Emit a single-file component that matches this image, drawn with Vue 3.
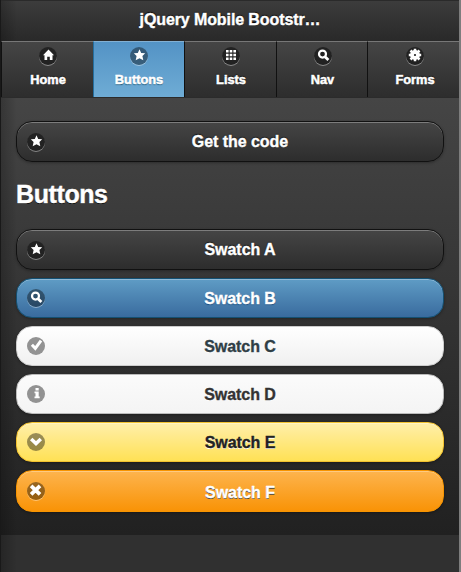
<script setup>
const tabs = [
  { label: 'Home', icon: 'home' },
  { label: 'Buttons', icon: 'star', active: true },
  { label: 'Lists', icon: 'grid' },
  { label: 'Nav', icon: 'search' },
  { label: 'Forms', icon: 'gear' },
]

const swatches = [
  { label: 'Swatch A', theme: 'a', icon: 'star' },
  { label: 'Swatch B', theme: 'b', icon: 'search' },
  { label: 'Swatch C', theme: 'c', icon: 'check' },
  { label: 'Swatch D', theme: 'd', icon: 'info' },
  { label: 'Swatch E', theme: 'e', icon: 'down' },
  { label: 'Swatch F', theme: 'f', icon: 'x' },
]

// Filled glyphs on an 18 x 18 grid
const glyphs = {
  home: 'M9.5 2.6 L15 8.2 H13.5 V13 H10.8 V9.8 H8.2 V13 H5.5 V8.2 H4 Z',
  star: 'M9.5 2.2 L11.2 5.9 L15.2 6.3 L12.4 9.1 L13.3 13.3 L9.5 11.3 L5.7 13.3 L6.6 9.1 L3.8 6.3 L7.8 5.9 Z',
  grid: 'M4 3h2.6v2.6H4z M7.7 3h2.6v2.6H7.7z M11.4 3H14v2.6h-2.6z M4 6.7h2.6v2.6H4z M7.7 6.7h2.6v2.6H7.7z M11.4 6.7H14v2.6h-2.6z M4 10.4h2.6V13H4z M7.7 10.4h2.6V13H7.7z M11.4 10.4H14V13h-2.6z',
  info: 'M8.5 3h3.2v2.6H8.5z M7.5 6.5h4.2v5h1V13.2H7.5v-1.7h1V8.2h-1z',
}
</script>

<template>
  <main class="page">
    <header class="header"><h1>jQuery Mobile Bootstr…</h1></header>

    <nav class="tabs">
      <a v-for="tab in tabs" :key="tab.label" class="tab" :class="{ active: tab.active }">
        <span class="badge">
          <svg viewBox="0 0 18 18" width="18" height="18">
            <path v-if="glyphs[tab.icon]" :d="glyphs[tab.icon]" fill="#fff" />
            <g v-else-if="tab.icon === 'search'" fill="none" stroke="#fff">
              <circle cx="8.5" cy="7.1" r="3.5" stroke-width="2.2" />
              <path d="M11 9.7 L14.4 13.1" stroke-width="2.8" />
            </g>
            <g v-else fill="none" stroke="#fff">
              <circle cx="9" cy="8" r="3" stroke-width="3.8" />
              <path d="M9 1.8V4.5M9 11.5V14.2M2.8 8H5.5M12.5 8H15.2M4.5 3.5L6.5 5.5M11.5 10.5L13.5 12.5M13.5 3.5L11.5 5.5M6.5 10.5L4.5 12.5" stroke-width="2.5" />
            </g>
          </svg>
        </span>
        <span class="tab-label">{{ tab.label }}</span>
      </a>
    </nav>

    <section class="content">
      <button class="btn a">
        <span class="badge">
          <svg viewBox="0 0 18 18" width="18" height="18"><path :d="glyphs.star" fill="#fff" /></svg>
        </span>
        <span class="label">Get the code</span>
      </button>

      <h2>Buttons</h2>

      <div class="list">
        <button v-for="s in swatches" :key="s.theme" class="btn" :class="s.theme">
          <span class="badge">
            <svg viewBox="0 0 18 18" width="18" height="18">
              <path v-if="glyphs[s.icon]" :d="glyphs[s.icon]" fill="#fff" />
              <g v-else fill="none" stroke="#fff">
                <template v-if="s.icon === 'search'">
                  <circle cx="8.5" cy="7.1" r="3.5" stroke-width="2.2" />
                  <path d="M11 9.7 L14.4 13.1" stroke-width="2.8" />
                </template>
                <path v-else-if="s.icon === 'check'" d="M4.9 7.8 L8.3 11.4 L14 3.6" stroke-width="3" />
                <path v-else-if="s.icon === 'down'" d="M4.2 6 L9 10.6 L13.8 6" stroke-width="3.5" />
                <path v-else d="M4.1 3.8 L13 12.4 M13 3.8 L4.1 12.4" stroke-width="3.8" />
              </g>
            </svg>
          </span>
          <span class="label">{{ s.label }}</span>
        </button>
      </div>
    </section>
  </main>
</template>

<style>
body {
  margin: 0;
  background: #303030;
}
</style>

<style scoped>
.page {
  box-sizing: border-box;
  height: 572px;
  border-left: 1px solid #191919;
  border-right: 2px solid #7d7d7d;
  background: linear-gradient(90deg, rgba(0, 0, 0, 0.22), transparent 16px), #303030;
  font-family: 'Liberation Sans', Arial, sans-serif;
  font-weight: bold;
  color: #fff;
}

.header {
  box-sizing: border-box;
  height: 41px;
  border-top: 1px solid #2a2a2a;
  background: linear-gradient(90deg, rgba(0, 0, 0, 0.22), transparent 16px), linear-gradient(#3c3c3c, #292929);
}

h1 {
  margin: 0;
  font-size: 16px;
  line-height: 38px;
  letter-spacing: -0.1px;
  text-align: center;
  text-shadow: 0 -1px 1px #000;
  -webkit-text-stroke: 0.4px #fff;
}

.tabs {
  display: grid;
  grid-template-columns: 92px 91px 92px 91px 1fr;
  height: 57px;
  box-sizing: border-box;
  border-bottom: 1px solid #2b2b2b;
}

.tab {
  display: flex;
  flex-direction: column;
  align-items: center;
  box-sizing: border-box;
  padding: 5px 0 0 1px;
  border-top: 1px solid #777;
  border-left: 1px solid #111;
  background: linear-gradient(#454545, #2d2d2d);
}

.tab:nth-child(4) {
  padding-left: 1px;
}

.tab:nth-child(5) {
  padding-left: 3px;
}

.tab.active {
  padding-left: 0;
  border-top-color: #82b0d3;
  border-left-color: #256f9f;
  background: linear-gradient(#5393c5, #6facd5);
}

.tab-label {
  margin-top: 7px;
  font-size: 12.8px;
  line-height: 15px;
  text-shadow: 0 -1px 1px #111;
  -webkit-text-stroke: 0.5px #fff;
}

.tab.active .tab-label {
  text-shadow: 0 1px 1px #145072;
}

.badge {
  flex: none;
  width: 18px;
  height: 18px;
  border-radius: 9px;
  background: rgba(0, 0, 0, 0.4);
  box-shadow: 0 1px 0 rgba(255, 255, 255, 0.4);
}

.tab:not(.active) .badge,
.a .badge {
  background: #222;
}

.badge svg {
  display: block;
}

.content {
  box-sizing: border-box;
  height: 437px;
  padding: 23px 14px 0 15px;
  background: linear-gradient(90deg, rgba(0, 0, 0, 0.22), transparent 16px), linear-gradient(#454545, #212121);
}

h2 {
  margin: 17px 0 19px;
  font-size: 25px;
  line-height: 31px;
  letter-spacing: -0.4px;
  text-shadow: 0 1px 0 #111;
  -webkit-text-stroke: 0.4px #fff;
}

.list {
  display: flex;
  flex-direction: column;
  gap: 8px;
}

.btn {
  display: flex;
  align-items: center;
  box-sizing: border-box;
  width: 428px;
  height: 40px;
  margin: 0;
  padding: 0 8px 0 10px;
  border: 1px solid;
  border-radius: 16px;
  font: bold 16px/20px 'Liberation Sans', Arial, sans-serif;
  color: #fff;
  box-shadow: 0 1px 3px rgba(0, 0, 0, 0.3), inset 0 1px 0 rgba(255, 255, 255, 0.3);
}

.label {
  flex: 1;
  padding-top: 2px;
  text-align: center;
  letter-spacing: -0.05px;
  -webkit-text-stroke: 0.35px currentColor;
}

.a {
  height: 41px;
  border-color: #111;
  background: linear-gradient(#454545, #2d2d2d);
  text-shadow: 0 -1px 1px #111;
}

.a .label {
  padding-top: 0;
}

.b {
  border-color: #145072;
  background: linear-gradient(#5f9cc5, #396b9e);
  text-shadow: 0 1px 1px #194b7e;
}

.c {
  border-color: #ccc;
  background: linear-gradient(#fff, #f0f0f0);
  color: #2f3e46;
  text-shadow: 0 1px 0 #fff;
}

.d {
  border-color: #bbb;
  background: linear-gradient(#fbfbfb, #f4f4f4);
  color: #333;
  text-shadow: 0 1px 0 #fff;
}

.e {
  border-color: #f3c22f;
  background: linear-gradient(#ffefaa, #ffe155);
  color: #222;
  text-shadow: 0 1px 0 #fff;
}

.f {
  height: 42px;
  border-color: #f79400;
  background: linear-gradient(#fdb44e, #f99306);
  text-shadow: 0 1px 0 #444;
}

.f .label {
  padding-top: 4px;
}

.c .badge,
.d .badge {
  background: #929292;
}

.c .badge,
.d .badge,
.e .badge {
  box-shadow: none;
}
</style>
